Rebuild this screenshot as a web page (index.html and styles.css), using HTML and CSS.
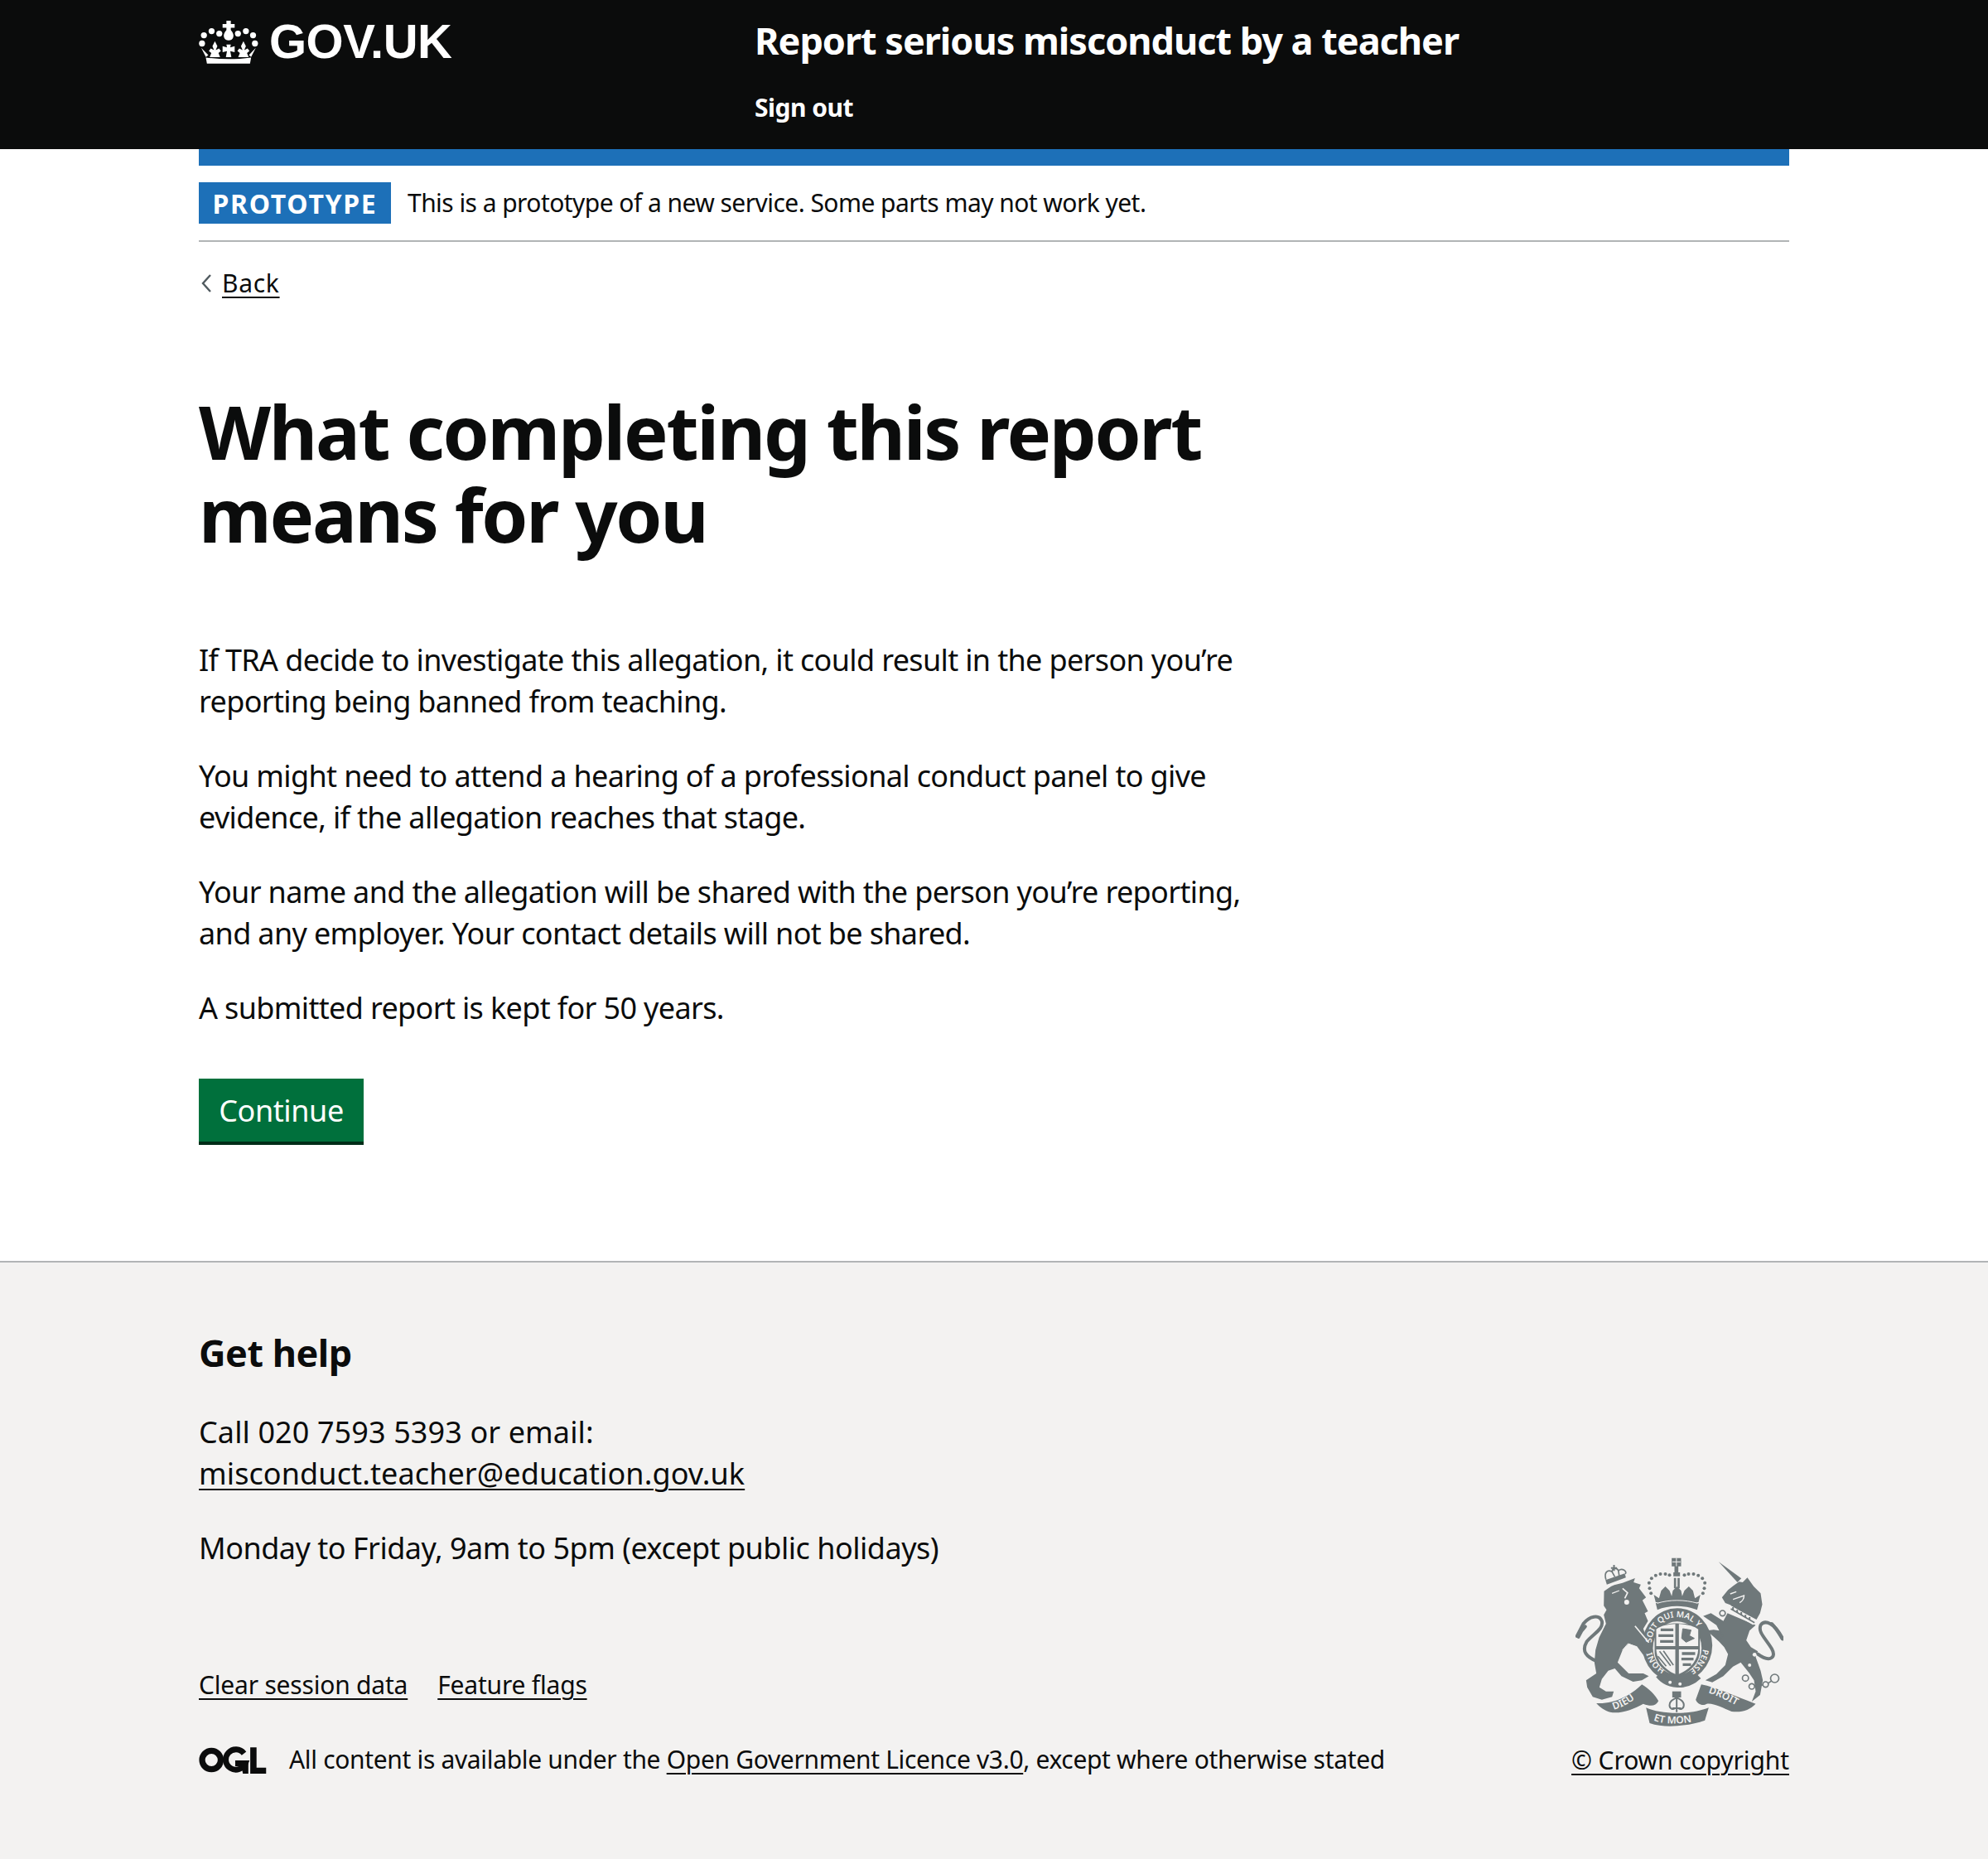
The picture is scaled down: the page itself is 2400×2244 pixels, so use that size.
FILE: index.html
```html
<!DOCTYPE html>
<html lang="en">
<head>
<meta charset="utf-8">
<title>What completing this report means for you</title>
<link rel="stylesheet" href="styles.css">
</head>
<body>
<header class="site-header">
  <div class="wrap header-row">
    <a class="logo" href="#">
      <svg class="crown" viewBox="60 62 216 160" aria-hidden="true">
        <g fill="#fff">
          <circle cx="78" cy="118" r="11"/><circle cx="106" cy="103" r="11"/><circle cx="134" cy="112" r="11"/>
          <circle cx="202" cy="112" r="11"/><circle cx="231" cy="103" r="11"/><circle cx="257" cy="118" r="11"/>
          <circle cx="71" cy="148" r="11"/><circle cx="264" cy="148" r="11"/>
          <path d="M160 65h16v12h14v14h-14v8c9 10 12 20 8 29c-3 6-8 9-16 9s-13-3-16-9c-4-9-1-19 8-29v-8h-14V77h14z"/>
          <path d="M85 199C140 207 196 207 250 199L246 221H89z"/>
          <path d="M68 164L94 190L85 197zM267 164L242 190L250 197z"/>
          <path d="M118 140L127 158L121 172L133 166L140 175L131 183L137 198H99L105 183L96 175L103 166L115 172L109 158z"/>
          <path d="M222 140L231 158L225 172L237 166L244 175L235 183L241 198H203L209 183L200 175L207 166L219 172L213 158z"/>
          <path d="M160 152h16l-2 10l16-4v22l-16-4l4 22h-20l4-22l-16 4v-22l16 4z"/>
        </g>
      </svg>
      <span class="logotype">GOV.UK</span>
    </a>
    <div class="service">
      <a class="service-name" href="#">Report serious misconduct by a teacher</a>
      <a class="sign-out" href="#">Sign out</a>
    </div>
  </div>
</header>

<div class="wrap">
  <div class="blue-bar"></div>
  <div class="phase">
    <strong class="tag">PROTOTYPE</strong>
    <span class="phase-text">This is a prototype of a new service. Some parts may not work yet.</span>
  </div>
  <a class="back" href="#">
    <svg class="chev" viewBox="0 0 12 22" aria-hidden="true"><path d="M11 1L2 11l9 10" fill="none" stroke="#505a5f" stroke-width="2.4"/></svg>
    <span class="link">Back</span>
  </a>
  <main class="main">
    <h1 class="title">What completing this report means for you</h1>
    <p class="body">If TRA decide to investigate this allegation, it could result in the person you’re reporting being banned from teaching.</p>
    <p class="body">You might need to attend a hearing of a professional conduct panel to give evidence, if the allegation reaches that stage.</p>
    <p class="body">Your name and the allegation will be shared with the person you’re reporting, and any employer. Your contact details will not be shared.</p>
    <p class="body">A submitted report is kept for 50 years.</p>
    <a class="button" href="#">Continue</a>
  </main>
</div>

<footer class="footer">
  <div class="wrap footer-row">
    <div class="footer-main">
      <h2 class="help-title">Get help</h2>
      <p class="body help-contact">Call 020 7593 5393 or email:<br><a class="link" href="#">misconduct.teacher@education.gov.uk</a></p>
      <p class="body help-hours">Monday to Friday, 9am to 5pm (except public holidays)</p>
      <div class="footer-links">
        <a class="link" href="#">Clear session data</a>
        <a class="link" href="#">Feature flags</a>
      </div>
      <div class="licence">
        <svg class="ogl" viewBox="60 72 246 100" aria-hidden="true">
          <circle cx="105" cy="122" r="34" fill="none" stroke="#0b0c0c" stroke-width="22"/>
          <path d="M224 98A37 37 0 1 0 229 134H192" fill="none" stroke="#0b0c0c" stroke-width="21"/>
          <path d="M212 130H240V172H220zM247 76H270V150H305V172H247z" fill="#0b0c0c"/>
        </svg>
        <span class="licence-text">All content is available under the <a class="link" href="#">Open Government Licence v3.0</a>, except where otherwise stated</span>
      </div>
    </div>
    <div class="footer-side">
      <svg class="crest" viewBox="130 60 752 612" role="img" aria-label="Royal coat of arms">
        <defs>
          <path id="garter-a" d="M405 372A93 96 0 0 1 591 372"/>
          <path id="garter-b" d="M591 392A93 96 0 0 1 535 470"/>
          <path id="garter-c" d="M455 464A93 96 0 0 1 405 396"/>
          <path id="dieu" d="M268 612C305 600 340 580 368 552"/>
          <path id="etmon" d="M412 650C460 668 535 664 585 646"/>
          <path id="droit" d="M610 550C650 562 700 588 742 614"/>
        </defs>
        <g fill="#6f787a">
          <!-- lion crown -->
          <path d="M243 158L312 133L308 118L238 142z"/>
          <g fill="none" stroke="#6f787a" stroke-width="5">
            <path d="M240 140C232 115 245 102 262 112C262 98 280 96 285 108C298 96 318 110 310 120"/>
            <path d="M262 112L272 130M285 108L288 128"/>
          </g>
          <path d="M258 95h8v-8h6v8h8v6h-8v8h-6v-8h-8z"/>
          <!-- lion head, mane and body -->
          <path d="M233 182C245 176 255 165 270 160L300 152L345 135L340 150L366 158L360 172L385 205L372 215L392 255L380 262L392 290L375 318L395 375L398 410L380 420L352 382L322 372L300 395L282 440L322 480L375 480L395 490L370 505L338 510L296 490L272 462L248 470L225 500L216 530L240 545L268 545L262 565L225 575L192 565L172 530L168 505L205 480L198 440L202 395L215 350L240 300L232 268L242 250L232 235z"/>
          <!-- unicorn horn and head -->
          <path d="M648 76L730 136L716 150z"/>
          <path d="M702 162L722 148L735 150L752 133L775 165L800 190L806 230L798 262L785 285L700 240L690 232L672 225L660 205L682 178z"/>
          <!-- unicorn body -->
          <path d="M680 262L782 305L760 325L748 360L765 385L790 400L782 420L800 470L808 505L798 558L768 582L782 545L776 505L758 478L728 440L700 455L665 490L625 512L600 505L640 482L672 450L682 410L668 385L650 365L605 325L630 322L650 325L640 305L592 272L620 262L665 290z"/>
          <!-- royal crown -->
          <path d="M478 62h34v30h-34zM488 92h14v24h-14zM484 114h24v14h-24z"/>
          <path d="M486 134h8v38h-8zM499 134h8v38h-8z"/>
          <circle cx="398" cy="172" r="6"/><circle cx="396" cy="152" r="6"/><circle cx="405" cy="136" r="6"/><circle cx="420" cy="125" r="6"/><circle cx="437" cy="120" r="6"/><circle cx="455" cy="120" r="6"/><circle cx="470" cy="124" r="6"/>
          <circle cx="596" cy="172" r="6"/><circle cx="598" cy="152" r="6"/><circle cx="589" cy="136" r="6"/><circle cx="574" cy="125" r="6"/><circle cx="557" cy="120" r="6"/><circle cx="539" cy="120" r="6"/><circle cx="524" cy="124" r="6"/>
          <circle cx="403" cy="190" r="6"/><circle cx="591" cy="190" r="6"/>
          <path d="M413 195L432 208L440 180L455 165L470 180L478 200L482 180L497 165L512 180L516 200L524 180L540 165L555 180L562 208L582 195L575 222H420z"/>
          <path d="M420 226C470 208 525 208 576 226L570 250C530 232 465 232 426 250z"/>
          <!-- garter ring -->
          <ellipse cx="498" cy="378" rx="127" ry="134"/>
          <!-- motto scroll -->
          <path d="M205 588C270 592 330 560 370 520C395 535 420 560 430 580C420 600 400 600 375 590C340 610 290 628 255 620C235 615 218 602 205 588z"/>
          <path d="M585 520C640 530 700 560 782 590C760 612 735 622 695 618C665 605 625 585 605 590C590 600 570 590 565 575z"/>
          <path d="M385 604C440 630 550 630 612 604L598 650C540 670 455 680 398 660z"/>
          <path d="M480 545h32v22h-32z"/>
          <g fill="none" stroke="#6f787a" stroke-width="12" stroke-linecap="round">
            <path d="M205 435C170 420 150 400 170 365C195 335 232 320 225 290C215 265 180 272 158 300L135 345"/>
            <path d="M790 410C830 440 860 425 840 390C815 350 790 330 800 305C815 285 850 295 880 355"/>
            <path d="M165 310C150 325 145 335 140 348"/>
            <path d="M840 300C858 318 868 338 878 354"/>
          </g>
          <!-- chain rings -->
          <g fill="none" stroke="#6f787a" stroke-width="5">
            <circle cx="745" cy="497" r="11"/><circle cx="768" cy="527" r="10"/><circle cx="818" cy="520" r="10"/><circle cx="851" cy="498" r="15"/>
            <circle cx="662" cy="262" r="10"/><circle cx="652" cy="342" r="10"/>
            <path d="M778 525L808 522M828 515L838 508"/>
          </g>
          <!-- fleur outline -->
          <path d="M496 567C482 575 470 580 470 595C470 608 482 612 490 606M496 567C510 575 522 580 522 595C522 608 510 612 502 606M496 567V620M480 606H512" fill="none" stroke="#6f787a" stroke-width="6"/>
        </g>
        <!-- light detail over the silhouettes -->
        <g fill="none" stroke="#f3f2f1">
          <ellipse cx="498" cy="388" rx="88" ry="96" fill="#f3f2f1" stroke="none"/>
          <path d="M300 172l18 16l-10 20" stroke-width="5"/>
          <path d="M262 190l26-10" stroke-width="4"/>
          <path d="M690 192l22-8M700 212l40-14c0 12-6 20-16 26" stroke-width="4"/>
          <path d="M692 246L778 296" stroke-width="20"/>
          <path d="M345 308l50 60" stroke-width="5"/>
          <path d="M300 395L320 372L350 384" stroke-width="3"/>
          <path d="M495 62v30M480 76h30" stroke-width="3"/>
          <path d="M425 226C470 212 525 212 572 226" stroke-width="3"/>
        </g>
        <path d="M692 246L778 296" fill="none" stroke="#6f787a" stroke-width="5"/>
        <path d="M700 240v10M715 250v10M730 258v10M745 268v10M760 276v10" stroke="#6f787a" stroke-width="6" fill="none"/>
        <!-- strap under the shield -->
        <path d="M432 484C465 525 530 530 574 488" fill="none" stroke="#6f787a" stroke-width="28"/>
        <g fill="#f3f2f1">
          <circle cx="315" cy="222" r="9"/>
          <circle cx="785" cy="372" r="10"/><circle cx="778" cy="412" r="7"/><circle cx="760" cy="450" r="6"/>
          <circle cx="472" cy="512" r="6"/><circle cx="508" cy="518" r="6"/>
          <text class="crest-text garter"><textPath href="#garter-a" startOffset="1%">SOIT QUI MAL Y</textPath></text>
          <text class="crest-text garter"><textPath href="#garter-b">PENSE</textPath></text>
          <text class="crest-text garter"><textPath href="#garter-c">HONI</textPath></text>
          <text class="crest-text"><textPath href="#dieu">DIEU</textPath></text>
          <text class="crest-text"><textPath href="#etmon">ET MON</textPath></text>
          <text class="crest-text"><textPath href="#droit">DROIT</textPath></text>
        </g>
        <!-- quartered shield -->
        <path d="M416 318C445 292 550 292 580 318V400C580 445 540 478 498 494C456 478 416 445 416 400z" fill="#6f787a"/>
        <path d="M422 320C440 306 470 302 491 301V381H422zM504 301C525 302 556 306 574 320V381H504zM422 393H491V482C456 468 424 436 422 393zM504 393H574C572 436 540 468 504 482z" fill="#f3f2f1"/>
        <g stroke="#6f787a" fill="none">
          <path d="M438 322h46M430 343h54M436 364h48" stroke-width="10"/>
          <path d="M518 318l30 5l-6 20l18 10l-30 14l-16-14z" fill="#6f787a" stroke-width="3"/>
          <path d="M515 408h48M513 428h44M518 448h30" stroke-width="10"/>
          <path d="M434 400l40 52M448 398l36 52M428 418l30 36" stroke-width="5"/>
        </g>
      </svg>
      <a class="link copyright" href="#">© Crown copyright</a>
    </div>
  </div>
</footer>
</body>
</html>
```

FILE: styles.css
```css
* { box-sizing: border-box; }

html, body { margin: 0; padding: 0; }

body {
  font-family: "Noto Sans", "Liberation Sans", sans-serif;
  color: #0b0c0c;
  background: #fff;
}

a { color: inherit; }

.wrap {
  width: 1920px;
  margin: 0 auto;
}

.link {
  color: #0b0c0c;
  text-decoration: underline;
  text-decoration-thickness: 2px;
  text-underline-offset: 5px;
}

/* Header */
.site-header {
  background: #0b0c0c;
  height: 180px;
  color: #fff;
}

.header-row {
  display: flex;
  padding-top: 20px;
}

.logo {
  width: 671px;
  height: 60px;
  display: flex;
  align-items: center;
  gap: 13px;
  color: #fff;
  text-decoration: none;
}

.crown {
  width: 72px;
  height: 53px;
  flex: none;
}

.logotype {
  font-family: "Liberation Sans", Arial, sans-serif;
  font-weight: 700;
  font-size: 58px;
  line-height: 60px;
  letter-spacing: -0.5px;
}

.service {
  display: flex;
  flex-direction: column;
  align-items: flex-start;
}

.service-name {
  font-weight: 700;
  font-size: 45px;
  line-height: 58px;
  letter-spacing: -1px;
  color: #fff;
  text-decoration: none;
}

.sign-out {
  margin-top: 32px;
  font-weight: 700;
  font-size: 30px;
  line-height: 40px;
  letter-spacing: -0.5px;
  color: #fff;
  text-decoration: none;
}

/* Phase banner */
.blue-bar {
  height: 20px;
  background: #1d70b8;
}

.phase {
  display: flex;
  align-items: center;
  gap: 20px;
  padding: 20px 0;
  border-bottom: 2px solid #b1b4b6;
  height: 92px;
}

.tag {
  width: 232px;
  height: 50px;
  display: flex;
  align-items: center;
  justify-content: center;
  background: #1d70b8;
  color: #fff;
  font-size: 32px;
  font-weight: 700;
  letter-spacing: 1.7px;
}

.phase-text {
  font-size: 30px;
  line-height: 40px;
  letter-spacing: -0.55px;
}

/* Back */
.back {
  display: flex;
  align-items: center;
  gap: 16px;
  margin-top: 30px;
  font-size: 30px;
  line-height: 40px;
  letter-spacing: 0.7px;
  text-decoration: none;
  width: max-content;
}

.chev {
  width: 12px;
  height: 22px;
  margin-left: 3px;
  margin-right: -3px;
}

/* Main */
.main {
  width: 1280px;
  margin-top: 108px;
  padding-bottom: 140px;
}

.title {
  margin: 0 0 102px;
  font-size: 90px;
  line-height: 100px;
  font-weight: 700;
  letter-spacing: -2.3px;
}

.body {
  margin: 0 0 40px;
  font-size: 36px;
  line-height: 50px;
  letter-spacing: -0.65px;
}

.button {
  display: block;
  width: 199px;
  height: 80px;
  margin-top: 60px;
  background: #00703c;
  border-bottom: 4px solid #002d18;
  color: #fff;
  font-size: 36px;
  line-height: 78px;
  text-align: center;
  text-decoration: none;
  letter-spacing: -0.4px;
}

/* Footer */
.footer {
  background: #f3f2f1;
  border-top: 2px solid #b1b4b6;
  height: 722px;
}

.footer-row {
  display: flex;
  justify-content: space-between;
  height: 100%;
}

.footer-main {
  padding-top: 79px;
}

.help-title {
  margin: 0 0 41px;
  font-size: 45px;
  line-height: 60px;
  font-weight: 700;
  letter-spacing: -0.5px;
}

.help-contact {
  margin-bottom: 40px;
  letter-spacing: 0.1px;
}

.help-hours {
  margin-bottom: 0;
  letter-spacing: -0.5px;
}

.footer-links {
  display: flex;
  gap: 36px;
  margin-top: 120px;
  font-size: 30px;
  line-height: 40px;
  letter-spacing: -0.2px;
}

.licence {
  display: flex;
  align-items: center;
  gap: 27px;
  margin-top: 50px;
  font-size: 30px;
  line-height: 40px;
  letter-spacing: -0.33px;
}

.ogl {
  width: 82px;
  height: 33px;
  flex: none;
}

.footer-side {
  display: flex;
  flex-direction: column;
  align-items: flex-end;
  padding-top: 356px;
}

.crest {
  width: 251px;
  height: 204px;
  margin-right: 7px;
}

.crest-text {
  font-family: "Noto Sans", sans-serif;
  font-size: 36px;
  font-weight: 600;
}

.garter {
  font-size: 30px;
}

.copyright {
  margin-top: 21px;
  font-size: 30px;
  line-height: 40px;
  letter-spacing: -0.1px;
}
```
